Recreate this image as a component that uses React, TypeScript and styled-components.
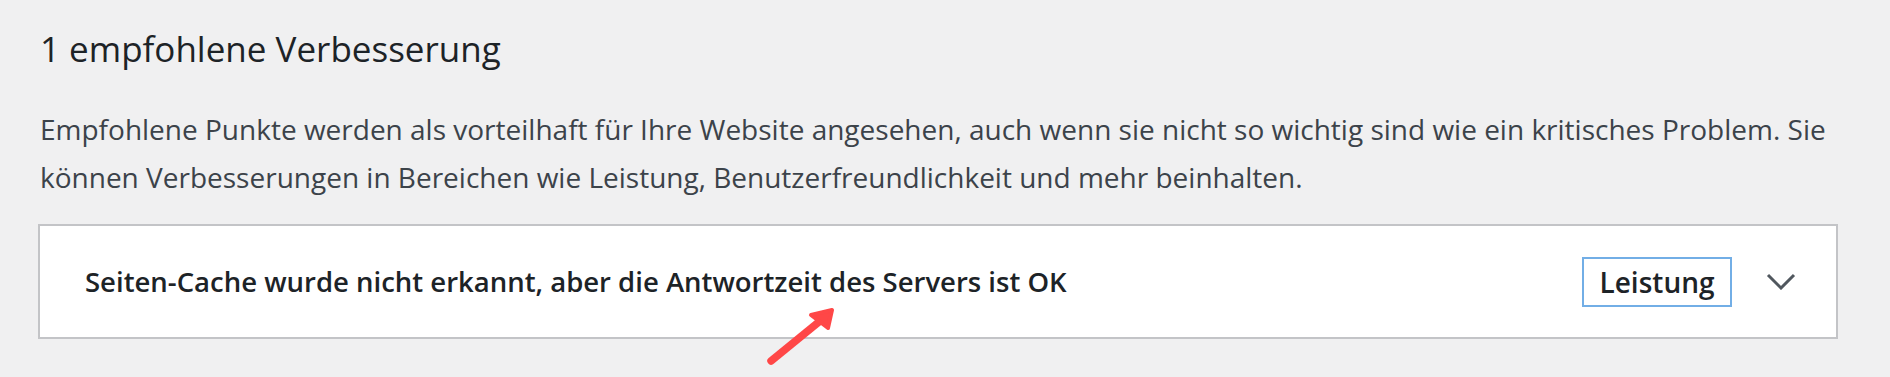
import React from "react";
import styled, { createGlobalStyle } from "styled-components";

const GlobalStyle = createGlobalStyle`
  body {
    margin: 0;
    background: #f0f0f1;
    font-family: "Open Sans", "Noto Sans", sans-serif;
  }
`;

const Page = styled.div`
  position: relative;
  width: 1890px;
  height: 377px;
  overflow: hidden;
  padding: 29px 24px 0 38px;
  box-sizing: border-box;
`;

const Heading = styled.h3`
  margin: 0 0 0 2px;
  font-size: 35px;
  line-height: 40px;
  font-weight: 400;
  color: #1d2327;
`;

const Description = styled.p`
  margin: 36px 0 23px 2px;
  font-size: 28px;
  line-height: 48px;
  color: #3c434a;
`;

const Card = styled.div`
  max-width: 1800px;
  height: 115px;
  box-sizing: border-box;
  background: #fff;
  border: 2px solid #c3c4c7;
  display: flex;
  align-items: center;
  padding: 0 40px 0 45px;
  gap: 34px;
`;

const Title = styled.span`
  flex: 1;
  font-size: 27.5px;
  font-weight: 600;
  color: #1d2327;
`;

const Badge = styled.span`
  box-sizing: border-box;
  width: 150px;
  height: 50px;
  border: 2px solid #72aee6;
  display: flex;
  align-items: center;
  justify-content: center;
  font-size: 28px;
  font-weight: 600;
  color: #1d2327;
`;

const Chevron = styled.svg`
  width: 30px;
  height: 17px;
  display: block;
`;

const Arrow = styled.svg`
  position: absolute;
  left: 758px;
  top: 300px;
  width: 90px;
  height: 75px;
`;

export default function App() {
  return (
    <>
      <GlobalStyle />
      <Page>
        <Heading>1 empfohlene Verbesserung</Heading>
        <Description>
          Empfohlene Punkte werden als vorteilhaft für Ihre Website angesehen, auch wenn sie nicht so wichtig sind wie ein kritisches Problem. Sie können Verbesserungen in Bereichen wie Leistung, Benutzerfreundlichkeit und mehr beinhalten.
        </Description>
        <Card>
          <Title>Seiten-Cache wurde nicht erkannt, aber die Antwortzeit des Servers ist OK</Title>
          <Badge>Leistung</Badge>
          <Chevron viewBox="0 0 30 17">
            <path d="M2 2 L15 15 L28 2" fill="none" stroke="#50575e" strokeWidth="3" />
          </Chevron>
        </Card>
        <Arrow viewBox="0 0 90 75">
          <line x1="13" y1="61" x2="62" y2="21" stroke="#ff4747" strokeWidth="7.5" strokeLinecap="round" />
          <path d="M53 15 L74 10 L70 28 Z" fill="#ff4747" stroke="#ff4747" strokeWidth="4" strokeLinejoin="round" />
        </Arrow>
      </Page>
    </>
  );
}
